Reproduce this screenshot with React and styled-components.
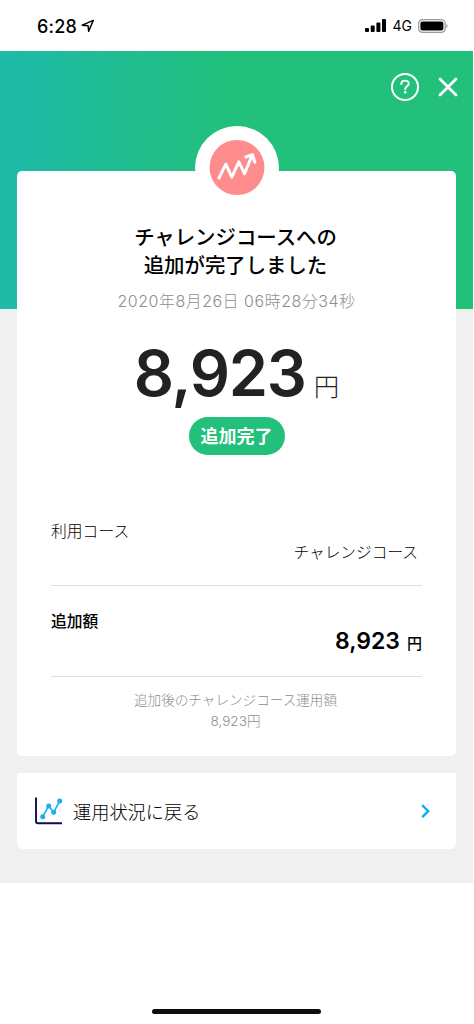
import React from "react";
import styled, { createGlobalStyle } from "styled-components";

const GlobalStyle = createGlobalStyle`
	* {
		box-sizing: border-box;
	}
	body {
		margin: 0;
		background: #ffffff;
		color: #000000;
		font-family: Inter, "Noto Sans CJK JP", sans-serif;
	}
`;

const Screen = styled.div`
	display: flex;
	flex-direction: column;
	width: 474px;
	height: 1024px;
	overflow: hidden;
`;

const StatusBar = styled.div`
	display: flex;
	align-items: center;
	height: 51px;
	padding: 1px 26px 0 37px;
`;

const Time = styled.span`
	flex: 1;
	display: flex;
	align-items: center;
	gap: 4px;
	font-size: 18px;
	font-weight: 500;
	letter-spacing: 0.2px;
`;

const Network = styled.span`
	margin: 0 6px 1px 7px;
	font-size: 14px;
`;

const Page = styled.main`
	display: flex;
	flex-direction: column;
	width: 473px;
	height: 832px;
	padding: 0 17px;
	background: linear-gradient(92deg, #1fbaa8 2%, #22c07a 50%) 0 0 / 100% 258px
		no-repeat #f0f0f0;
`;

const Toolbar = styled.div`
	display: flex;
	justify-content: flex-end;
	gap: 19px;
	height: 120px;
	padding-top: 21px;
	margin-right: -2px;
`;

const IconButton = styled.button`
	display: flex;
	height: 30px;
	padding: 0;
	border: none;
	background: none;
	color: #ffffff;
`;

const Card = styled.section`
	display: flex;
	flex-direction: column;
	align-items: center;
	height: 585px;
	padding: 0 34px;
	border-radius: 5px;
	background: #ffffff;
`;

const Badge = styled.div`
	display: flex;
	align-items: center;
	justify-content: center;
	flex-shrink: 0;
	width: 84px;
	height: 84px;
	margin-top: -45px;
	border-radius: 50%;
	background: #ffffff;
`;

const Title = styled.h1`
	margin: 14px 0 0;
	padding-right: 2px;
	font-size: 20.4px;
	font-weight: 500;
	line-height: 28px;
	text-align: center;
`;

const DateText = styled.p`
	margin: 11px 0 0;
	color: #8e8e8e;
	font-size: 16px;
	font-weight: 300;
	letter-spacing: 0.5px;
	line-height: 20px;
	white-space: nowrap;
`;

const Amount = styled.div`
	display: flex;
	align-items: baseline;
	gap: ${(props) => props.gap};
	height: ${(props) => props.height};
	margin-top: ${(props) => props.top || "0"};
	line-height: ${(props) => props.height};
	color: ${(props) => props.color || "#000000"};
`;

const Digits = styled.span`
	font-size: ${(props) => props.size};
	font-weight: 600;
	letter-spacing: ${(props) => props.spacing || "0"};
`;

const Unit = styled.span`
	font-size: ${(props) => props.size};
	font-weight: ${(props) => props.weight};
`;

const Pill = styled.span`
	width: 96px;
	height: 38px;
	margin: 6px 0 57px;
	border-radius: 19px;
	background: #22c07a;
	color: #ffffff;
	font-size: 18px;
	font-weight: 700;
	line-height: 40px;
	text-align: center;
`;

const Row = styled.div`
	display: flex;
	flex-direction: column;
	width: 371px;
	height: ${(props) => props.height};
	padding-top: ${(props) => props.top};
	border-bottom: 1px solid #dedede;
`;

const Label = styled.span`
	font-size: 15.8px;
	font-weight: ${(props) => props.weight};
	line-height: 21px;
`;

const Value = styled.div`
	align-self: flex-end;
	padding-right: ${(props) => props.right || "0"};
	font-size: 15.7px;
	font-weight: 300;
	line-height: 22px;
`;

const Note = styled.p`
	margin: 13px 0 0;
	padding-right: 2px;
	color: #8e8e8e;
	font-size: 13.6px;
	font-weight: 300;
	line-height: 21px;
	text-align: center;
`;

const LinkCard = styled.a`
	display: flex;
	align-items: center;
	height: 76px;
	margin-top: 17px;
	padding: 0 25px 0 17px;
	border-radius: 0 0 5px 5px;
	background: #ffffff;
`;

const LinkText = styled.span`
	flex: 1;
	margin-left: 10px;
	font-size: 18.2px;
	font-weight: 300;
`;

const HomeIndicator = styled.div`
	width: 169px;
	height: 5px;
	margin: 126px 0 0 152px;
	border-radius: 3px;
	background: #0c0f0d;
`;

const LocationIcon = () => (
	<svg width="14" height="14" viewBox="0 0 14 14" fill="none">
		<path d="M1.2 6.2 12.3 1.4 7.6 12.4 7.1 6.8Z" stroke="#000" strokeWidth="1.4" strokeLinejoin="round" />
	</svg>
);

const SignalIcon = () => (
	<svg width="21" height="14" viewBox="0 0 21 14">
		<rect x="0" y="9" width="4" height="4" rx="1" />
		<rect x="5.7" y="6.5" width="4" height="6.5" rx="1" />
		<rect x="11.4" y="3.5" width="4" height="9.5" rx="1" />
		<rect x="17" y="0" width="4" height="13" rx="1" />
	</svg>
);

const BatteryIcon = () => (
	<svg width="30" height="14" viewBox="0 0 30 14">
		<rect x="0.6" y="0.6" width="26.6" height="12.8" rx="4" fill="none" stroke="#999" strokeWidth="1.2" />
		<rect x="2.4" y="2.4" width="23" height="9.2" rx="2" />
		<path d="M28.5 5v4c1.3-.5 1.3-3.5 0-4Z" fill="#777" />
	</svg>
);

const HelpIcon = () => (
	<svg width="28" height="30" viewBox="0 0 28 30" fill="none" stroke="currentColor" strokeLinecap="round">
		<circle cx="14" cy="15" r="13" strokeWidth="2" />
		<path d="M10.3 12c.1-2.2 1.6-3.4 3.7-3.4s3.7 1.2 3.7 3.1c0 2.6-3.5 2.7-3.5 5.5" strokeWidth="1.9" />
		<circle cx="14.2" cy="20.3" r="1.3" fill="currentColor" stroke="none" />
	</svg>
);

const CloseIcon = () => (
	<svg width="20" height="30" viewBox="0 0 20 30" fill="none" stroke="currentColor" strokeWidth="2.8" strokeLinecap="round">
		<path d="M2 7 18 23M18 7 2 23" />
	</svg>
);

const CourseIcon = () => (
	<svg width="56" height="56" viewBox="0 0 56 56" fill="none">
		<circle cx="28" cy="27.5" r="27.5" fill="#ff8c8c" />
		<path
			d="M10 38 16.8 24.2 22.8 37.2 29.8 21.9 35.5 33.7 43 15.5M36.8 17 43.5 14.6 45.8 22.3"
			stroke="#fff"
			strokeWidth="3"
			strokeLinecap="round"
			strokeLinejoin="round"
		/>
	</svg>
);

const ChartIcon = () => (
	<svg width="29" height="28" viewBox="0 0 29 28" fill="none">
		<path d="M2 0.5V24.3Q2 26.3 4 26.3H28" stroke="#0d0f55" strokeWidth="1.9" />
		<path d="M8.7 19.7 14.7 9 19.7 15.3 25.7 4" stroke="#19aef0" strokeWidth="1.6" />
		<g fill="#19aef0">
			<circle cx="8.7" cy="19.7" r="2.5" />
			<circle cx="14.7" cy="9" r="2.5" />
			<circle cx="19.7" cy="15.3" r="2.5" />
			<circle cx="25.7" cy="4" r="2.5" />
		</g>
	</svg>
);

const ChevronIcon = () => (
	<svg width="10" height="16" viewBox="0 0 10 16" fill="none">
		<path d="M1.2 2.2 7.2 8.2 1.2 14.2" stroke="#08aef2" strokeWidth="2.4" />
	</svg>
);

const App = () => {
	return (
		<Screen>
			<GlobalStyle />
			<StatusBar>
				<Time>
					6:28
					<LocationIcon />
				</Time>
				<SignalIcon />
				<Network>4G</Network>
				<BatteryIcon />
			</StatusBar>
			<Page>
				<Toolbar>
					<IconButton aria-label="ヘルプ">
						<HelpIcon />
					</IconButton>
					<IconButton aria-label="閉じる">
						<CloseIcon />
					</IconButton>
				</Toolbar>
				<Card>
					<Badge>
						<CourseIcon />
					</Badge>
					<Title>
						チャレンジコースへの
						<br />
						追加が完了しました
					</Title>
					<DateText>2020年8月26日 06時28分34秒</DateText>
					<Amount gap="8px" height="76px" top="24px" color="#222222">
						<Digits size="63px" spacing="-1.2px">8,923</Digits>
						<Unit size="25.5px" weight="300">円</Unit>
					</Amount>
					<Pill>追加完了</Pill>
					<Row height="74px" top="9px">
						<Label weight="300">利用コース</Label>
						<Value right="4px">チャレンジコース</Value>
					</Row>
					<Row height="91px" top="25px">
						<Label weight="500">追加額</Label>
						<Value>
							<Amount gap="7px" height="18px">
								<Digits size="23px">8,923</Digits>
								<Unit size="15px" weight="500">円</Unit>
							</Amount>
						</Value>
					</Row>
					<Note>
						追加後のチャレンジコース運用額
						<br />
						8,923円
					</Note>
				</Card>
				<LinkCard>
					<ChartIcon />
					<LinkText>運用状況に戻る</LinkText>
					<ChevronIcon />
				</LinkCard>
			</Page>
			<HomeIndicator />
		</Screen>
	);
};

export default App;
